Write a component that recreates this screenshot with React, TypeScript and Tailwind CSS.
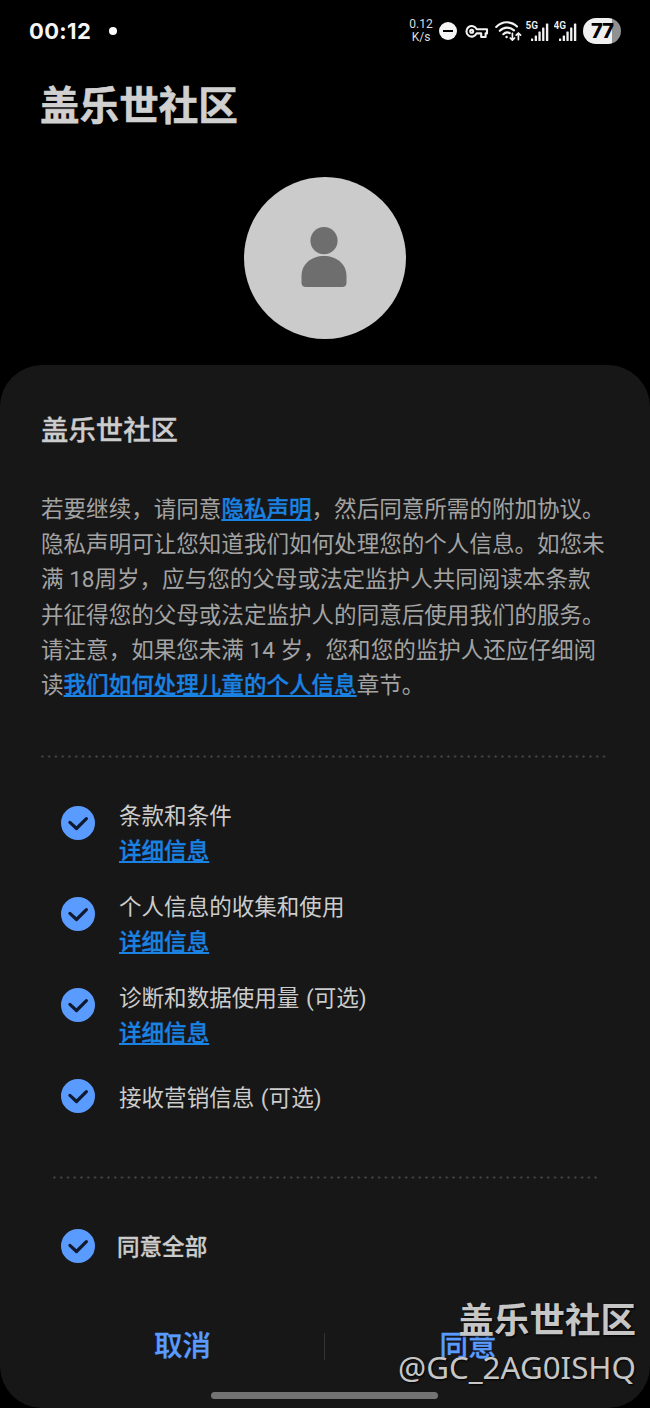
import { useState } from 'react';

interface Agreement {
    id: string;
    label: string;
    hasDetail: boolean;
}

const agreements: Agreement[] = [
    { id: 'terms', label: '条款和条件', hasDetail: true },
    { id: 'personal', label: '个人信息的收集和使用', hasDetail: true },
    { id: 'diagnostic', label: '诊断和数据使用量 (可选)', hasDetail: true },
    { id: 'marketing', label: '接收营销信息 (可选)', hasDetail: false },
];

function Signal({ label }: { label: string }) {
    return (
        <svg width="24" height="26" viewBox="0 0 24 26" fill="#f2f2f2">
            <text
                x="-0.5"
                y="11"
                fontSize="10"
                fontWeight="600"
                fontFamily="Roboto, sans-serif"
            >
                {label}
            </text>
            <rect x="5" y="20.5" width="2.2" height="2.5" rx="0.6" />
            <rect x="8.7" y="17.5" width="2.3" height="5.5" rx="0.6" />
            <rect x="12.4" y="13.5" width="2.3" height="9.5" rx="0.6" />
            <rect x="16.1" y="9.5" width="2.3" height="13.5" rx="0.6" />
            <rect x="19.9" y="5.5" width="2.4" height="17.5" rx="0.6" />
        </svg>
    );
}

function StatusBar() {
    return (
        <div className="flex h-[62px] items-center pl-[29px] pr-[29px] text-[#f5f5f5]">
            <span className="w-[62px] font-[Inter,sans-serif] text-[22px] leading-[26px] font-bold tracking-[0.35px]">
                00:12
            </span>
            <span className="ml-[18px] size-[8px] rounded-full bg-white" />
            <div className="ml-auto flex items-center">
                <div className="w-[24px] text-center font-[Roboto,sans-serif] text-[12px] leading-[13px] text-[#dddddd]">
                    <div>0.12</div>
                    <div>K/s</div>
                </div>
                <span className="ml-[6px] flex size-[18px] items-center justify-center rounded-full bg-[#f5f5f5]">
                    <span className="h-[2px] w-[10px] bg-black" />
                </span>
                <svg
                    className="mt-[2px] ml-[8px]"
                    width="24"
                    height="16"
                    viewBox="0 0 24 16"
                    fill="none"
                    stroke="#f2f2f2"
                    strokeWidth="2.1"
                    strokeLinejoin="round"
                >
                    <path d="M11.6 5.2H22V9.4H20.6V13H16.2V9.4H11.6A5.3 5.3 0 1 1 11.6 5.2Z" />
                    <circle cx="6.7" cy="7.3" r="1.5" />
                </svg>
                <svg
                    className="ml-[6px]"
                    width="28"
                    height="22"
                    viewBox="0 0 28 22"
                    fill="none"
                    stroke="#f2f2f2"
                    strokeWidth="2.1"
                    strokeLinecap="round"
                    strokeLinejoin="round"
                >
                    <path d="M1.2 7C7.4 0.8 16.2 0.8 22 6.6" />
                    <path d="M4.8 10.8C9 6.6 14.8 6.6 19 10.4" />
                    <path d="M8.3 14.2C10.2 12.2 12.8 12 14.8 13.2" />
                    <circle cx="11.6" cy="17" r="1.2" fill="#f2f2f2" stroke="none" />
                    <path d="M17.4 13.4V20M15.2 18L17.4 20.2L19.6 18" strokeWidth="1.7" />
                    <path d="M23.4 19.6V13M21.2 15.2L23.4 13L25.6 15.2" strokeWidth="1.7" />
                </svg>
                <div className="ml-[3px] flex gap-[4px]">
                    <Signal label="5G" />
                    <Signal label="4G" />
                </div>
                <div className="ml-[5px] flex h-[26px] w-[38px] items-center justify-center rounded-full bg-linear-to-r from-[#f0f0f0] from-77% to-[#919191] to-77% font-[Inter,sans-serif] text-[20px] font-extrabold tracking-[-1px] text-black">
                    77
                </div>
            </div>
        </div>
    );
}

function DottedLine() {
    return (
        <div className="h-[3px] bg-[radial-gradient(circle,#454545_0.8px,transparent_1.5px)] bg-[length:6.78px_3px]" />
    );
}

interface CheckProps {
    checked: boolean;
    onToggle: () => void;
}

function RoundCheck({ checked, onToggle }: CheckProps) {
    return (
        <button
            type="button"
            role="checkbox"
            aria-checked={checked}
            onClick={onToggle}
            className="size-[34px] shrink-0"
        >
            <svg width="34" height="34" viewBox="0 0 34 34" fill="none">
                <circle
                    cx="17"
                    cy="17"
                    r="16"
                    fill={checked ? '#5a9bff' : 'none'}
                    stroke="#5a9bff"
                    strokeWidth="2"
                />
                {checked && (
                    <path
                        d="M8.9 16.4L15.5 22.5L25.4 12.7"
                        stroke="#101a2e"
                        strokeWidth="3.2"
                        strokeLinecap="round"
                        strokeLinejoin="round"
                    />
                )}
            </svg>
        </button>
    );
}

const linkClass =
    'text-[#1a82e2] font-medium underline decoration-[1.5px] underline-offset-[2px] [-webkit-text-stroke:0.3px_#1a82e2]';

export default function App() {
    const [checkedIds, setCheckedIds] = useState<string[]>(
        agreements.map((a) => a.id)
    );
    const allChecked = checkedIds.length === agreements.length;

    const toggle = (id: string) => {
        setCheckedIds((prev) =>
            prev.includes(id) ? prev.filter((v) => v !== id) : [...prev, id]
        );
    };

    const toggleAll = () => {
        setCheckedIds(allChecked ? [] : agreements.map((a) => a.id));
    };

    return (
        <div className="relative flex h-[1408px] w-[650px] flex-col overflow-hidden bg-black font-[Roboto,'Noto_Sans_CJK_SC',sans-serif] whitespace-nowrap">
            <StatusBar />
            <h1 className="mt-[15px] pl-[40px] text-[39.6px] leading-[60px] font-bold text-[#d0d0d0] [-webkit-text-stroke:0.6px_#d0d0d0]">
                盖乐世社区
            </h1>
            <div className="mt-[39.5px] mr-px flex size-[162px] items-center justify-center self-center rounded-full bg-[#cbcbcb]">
                <svg
                    className="mr-[1px] mb-[1px]"
                    width="46"
                    height="60"
                    viewBox="0 0 46 60"
                    fill="#6e6e6e"
                >
                    <circle cx="23" cy="13.7" r="13.6" />
                    <path d="M0.5 49C0.5 37 10.5 29 23 29S45.5 37 45.5 49V55.5Q45.5 60 41 60H5Q0.5 60 0.5 55.5Z" />
                </svg>
            </div>

            <main className="mt-[26.5px] flex h-[1043px] flex-col rounded-[42px] bg-[#171717]">
                <h2 className="mt-[46px] pl-[41px] text-[27.4px] leading-[40px] font-medium text-[#cccccc] [-webkit-text-stroke:0.3px_#cccccc]">
                    盖乐世社区
                </h2>
                <p className="mt-[41px] pl-[41px] text-[22.55px] leading-[35.2px] text-[#a3a3a3]">
                    若要继续，请同意
                    <a href="#privacy" className={linkClass}>
                        隐私声明
                    </a>
                    ，然后同意所需的附加协议。
                    <br />
                    隐私声明可让您知道我们如何处理您的个人信息。如您未
                    <br />
                    满 18周岁，应与您的父母或法定监护人共同阅读本条款
                    <br />
                    并征得您的父母或法定监护人的同意后使用我们的服务。
                    <br />
                    请注意，如果您未满 14 岁，您和您的监护人还应仔细阅
                    <br />
                    读
                    <a href="#children" className={linkClass}>
                        我们如何处理儿童的个人信息
                    </a>
                    章节。
                </p>

                <div className="mt-[51.5px] pl-[39px] pr-[42px]">
                    <DottedLine />
                </div>

                <ul className="mt-[41.5px] pl-[61px]">
                    {agreements.map((item) => (
                        <li key={item.id} className="flex h-[91px]">
                            <div className="pt-[7px]">
                                <RoundCheck
                                    checked={checkedIds.includes(item.id)}
                                    onToggle={() => toggle(item.id)}
                                />
                            </div>
                            <div className="ml-[24px] text-[22.55px] leading-[35px] [word-spacing:1px]">
                                {item.hasDetail ? (
                                    <>
                                        <p className="text-[#cccccc]">{item.label}</p>
                                        <a href={`#${item.id}`} className={linkClass}>
                                            详细信息
                                        </a>
                                    </>
                                ) : (
                                    <p className="pt-[9px] text-[#cccccc]">
                                        {item.label}
                                    </p>
                                )}
                            </div>
                        </li>
                    ))}
                </ul>

                <div className="mt-[13px] pl-[51px] pr-[52px]">
                    <DottedLine />
                </div>

                <div className="mt-[49px] flex h-[35px] items-center pl-[61px]">
                    <RoundCheck checked={allChecked} onToggle={toggleAll} />
                    <span className="ml-[22px] pt-[5px] text-[22.55px] font-medium text-[#cccccc] [-webkit-text-stroke:0.3px_#cccccc]">
                        同意全部
                    </span>
                </div>

                <div className="mt-[64px] flex h-[40px] items-center text-[28.5px] font-medium text-[#5a9bff] [-webkit-text-stroke:0.3px_#5a9bff]">
                    <button type="button" className="ml-[41px] w-[283px] pt-[1px]">
                        取消
                    </button>
                    <span className="mb-[2px] h-[27px] w-px bg-[#333333]" />
                    <button type="button" className="w-[286px] pt-[1px]">
                        同意
                    </button>
                </div>
                <div className="mt-[25px] mr-px h-[7px] w-[227px] shrink-0 self-center rounded-full bg-[#737373]" />
            </main>

            <div className="absolute right-[14px] bottom-[18px] text-right text-[#c6c6c6] text-shadow-[1px_1px_2px_#000]">
                <div className="text-[35.5px] leading-[46px] font-bold">盖乐世社区</div>
                <div className="font-['Noto_Sans',sans-serif] text-[31.3px] leading-[46px]">
                    @GC_2AG0ISHQ
                </div>
            </div>
        </div>
    );
}
